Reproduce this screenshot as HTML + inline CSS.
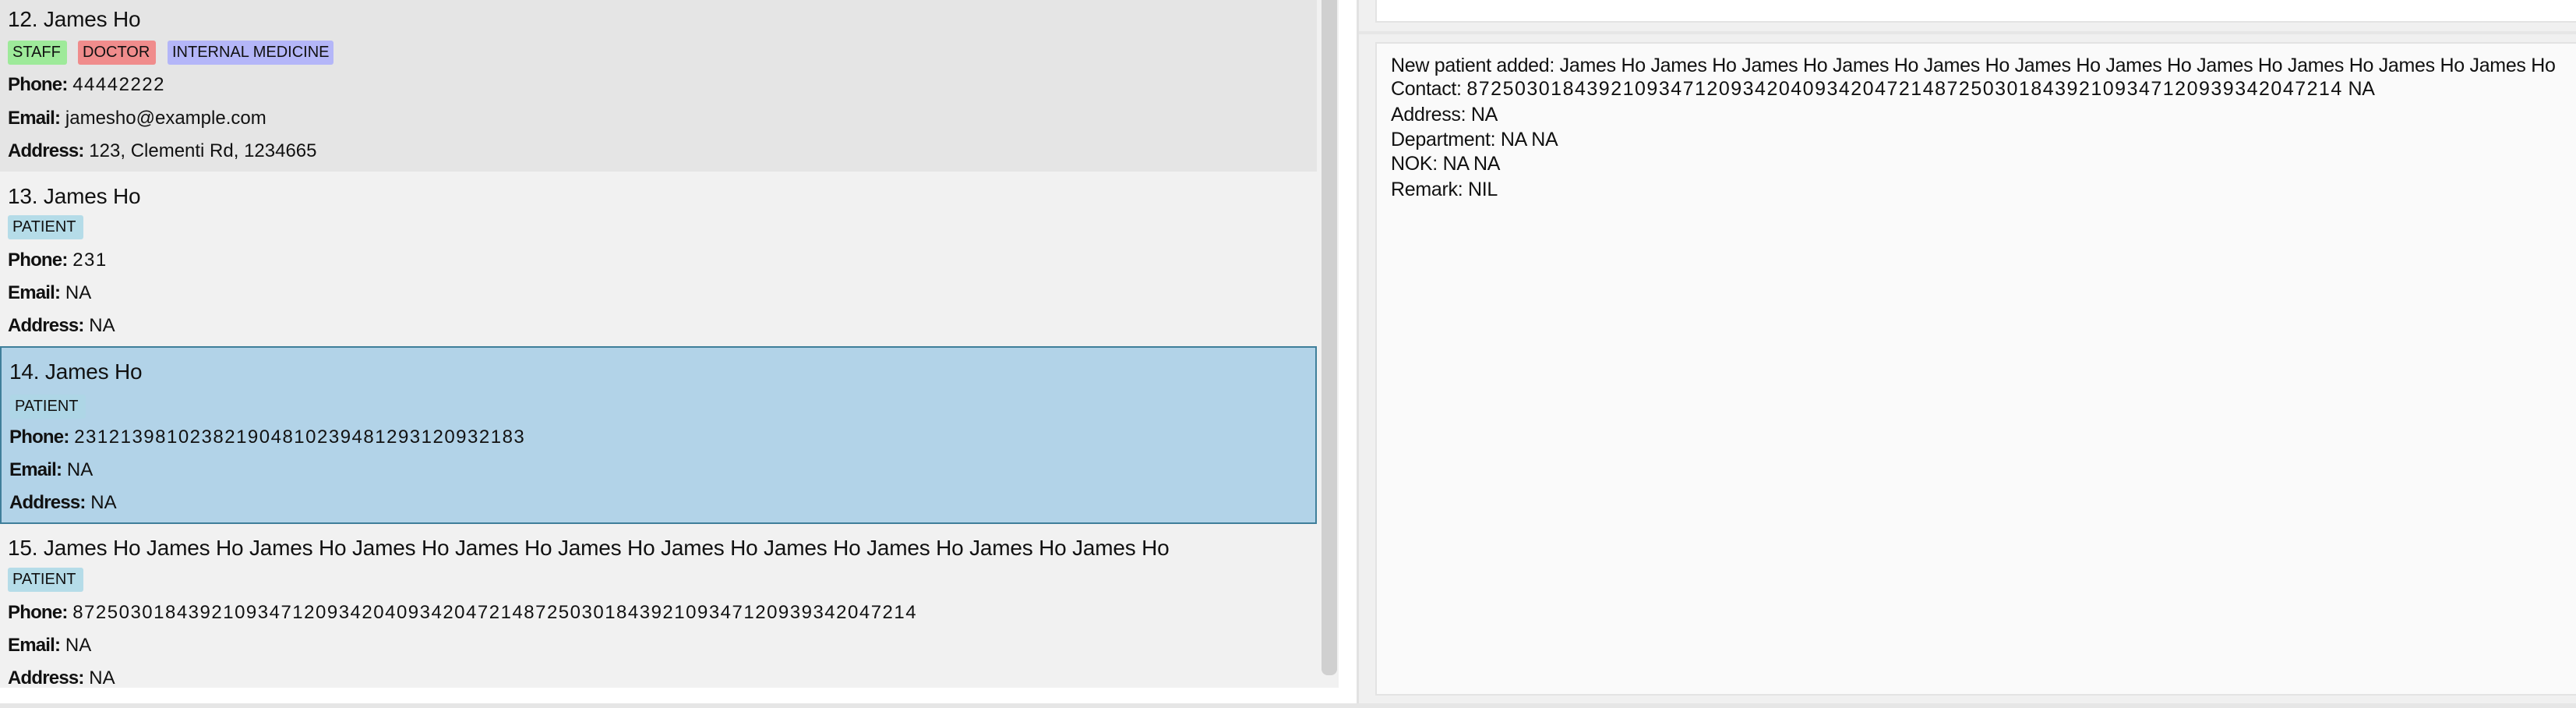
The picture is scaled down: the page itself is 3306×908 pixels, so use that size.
<!DOCTYPE html>
<html><head><meta charset="utf-8"><style>
*{margin:0;padding:0;box-sizing:border-box}
body{width:3306px;height:908px;background:#fff;font-family:"Liberation Sans",sans-serif;color:#111;position:relative;overflow:hidden}
.abs{position:absolute}
.card{position:absolute;left:0;width:1690px;overflow:hidden}
.name{position:absolute;left:10px;font-size:28px;white-space:nowrap;letter-spacing:-0.2px}
.tag{position:absolute;height:31px;font-size:20px;line-height:31px;padding:0 6px;border-radius:3px;white-space:nowrap}
.ln{position:absolute;left:10px;font-size:24px;white-space:nowrap}
.ln b{font-weight:bold;letter-spacing:-0.8px}
.d{letter-spacing:1.5px}
.rt{position:absolute;left:1785px;font-size:25px;white-space:nowrap;width:1510px;overflow:hidden;letter-spacing:-0.3px}
</style></head><body>
<div class="abs" style="left:0;top:0;width:1718px;height:882px;background:#f1f1f1"></div>
<div class="card" style="top:0;height:220px;background:#e5e5e5">
 <div class="name" style="top:9px">12. James Ho</div>
 <div class="tag" style="left:10px;top:52px;width:76px;background:#9eea9a">STAFF</div>
 <div class="tag" style="left:100px;top:52px;width:100px;background:#f08c8c">DOCTOR</div>
 <div class="tag" style="left:215px;top:52px;width:213px;background:#b4b6f8">INTERNAL MEDICINE</div>
 <div class="ln" style="top:95px"><b>Phone:</b> <span class="d">44442222</span></div>
 <div class="ln" style="top:138px"><b>Email:</b> jamesho@example.com</div>
 <div class="ln" style="top:180px"><b>Address:</b> 123, Clementi Rd, 1234665</div>
</div>
<div class="card" style="top:220px;height:224px;background:#f1f1f1">
 <div class="name" style="top:16px">13. James Ho</div>
 <div class="tag" style="left:10px;top:56px;width:97px;background:#b5dce8">PATIENT</div>
 <div class="ln" style="top:100px"><b>Phone:</b> <span class="d">231</span></div>
 <div class="ln" style="top:142px"><b>Email:</b> NA</div>
 <div class="ln" style="top:184px"><b>Address:</b> NA</div>
</div>
<div class="abs" style="left:0;top:444px;width:1690px;height:228px;background:#b2d3e8;border:2px solid #3f7f9a;overflow:hidden">
 <div class="name" style="top:15px;left:10px">14. James Ho</div>
 <div class="tag" style="left:11px;top:60px;width:97px;background:#aed6e6">PATIENT</div>
 <div class="ln" style="top:101px"><b>Phone:</b> <span class="d">231213981023821904810239481293120932183</span></div>
 <div class="ln" style="top:143px"><b>Email:</b> NA</div>
 <div class="ln" style="top:185px"><b>Address:</b> NA</div>
</div>
<div class="card" style="top:672px;height:210px;background:#f1f1f1">
 <div class="name" style="top:15px">15. James Ho James Ho James Ho James Ho James Ho James Ho James Ho James Ho James Ho James Ho James Ho</div>
 <div class="tag" style="left:10px;top:56px;width:97px;background:#b5dce8">PATIENT</div>
 <div class="ln" style="top:100px"><b>Phone:</b> <span class="d">8725030184392109347120934204093420472148725030184392109347120939342047214</span></div>
 <div class="ln" style="top:142px"><b>Email:</b> NA</div>
 <div class="ln" style="top:184px"><b>Address:</b> NA</div>
</div>
<div class="abs" style="left:1696px;top:0;width:20px;height:866px;background:#d0d0d0;border-radius:0 0 8px 8px"></div>
<div class="abs" style="left:1741px;top:0;width:1565px;height:902px;background:#f0f0f0;border-left:3px solid #e2e2e2"></div>
<div class="abs" style="left:1765px;top:0;width:1541px;height:29px;background:#fff;border:2px solid #e3e3e3;border-top:none;border-right:none"></div>
<div class="abs" style="left:1744px;top:40px;width:1562px;height:4px;background:#e6e6e6"></div>
<div class="abs" style="left:1765px;top:54px;width:1541px;height:838px;background:#fafafa;border:2px solid #e3e3e3;border-right:none"></div>
<div class="rt" style="top:70px">New patient added: James Ho James Ho James Ho James Ho James Ho James Ho James Ho James Ho James Ho James Ho James Ho</div>
<div class="rt" style="top:100px">Contact: <span class="d">8725030184392109347120934204093420472148725030184392109347120939342047214</span> NA</div>
<div class="rt" style="top:133px">Address: NA</div>
<div class="rt" style="top:165px">Department: NA NA</div>
<div class="rt" style="top:196px">NOK: NA NA</div>
<div class="rt" style="top:229px">Remark: NIL</div>
<div class="abs" style="left:0;top:902px;width:3306px;height:6px;background:#e6e6e6"></div>
</body></html>
